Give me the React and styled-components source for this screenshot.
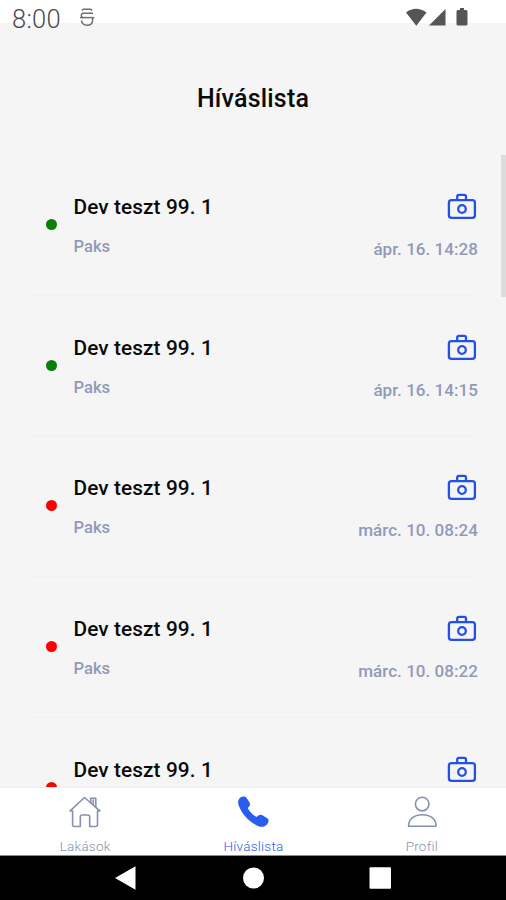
import React from "react";
import styled, { createGlobalStyle } from "styled-components";

const GlobalStyle = createGlobalStyle`
  * {
    box-sizing: border-box;
  }

  body {
    margin: 0;
    background: #f5f5f5;
    font-family: Roboto, "Liberation Sans", sans-serif;
  }

  svg {
    display: block;
  }
`;

const Screen = styled.div`
  display: flex;
  flex-direction: column;
  width: 506px;
  height: 900px;
  overflow: hidden;
  background: #f5f5f5;
`;

const StatusBar = styled.div`
  display: flex;
  flex-shrink: 0;
  height: 23px;
  padding: 0 38px 0 12px;
  background: #fff;
  color: #4c4c4c;
`;

const Clock = styled.span`
  width: 67px;
  height: 38px;
  font-size: 25.5px;
  font-weight: 300;
  line-height: 39px;
  letter-spacing: 0.3px;
`;

const StatusIcons = styled.div`
  margin-left: auto;
`;

const Header = styled.h1`
  flex-shrink: 0;
  height: 132px;
  margin: 0;
  padding-top: 61px;
  text-align: center;
  font-size: 25px;
  font-weight: 500;
  line-height: 30px;
  letter-spacing: 0.2px;
  color: #0a0a0a;
`;

const ListArea = styled.div`
  display: flex;
  flex: 1;
  min-height: 0;
  overflow: hidden;
`;

const List = styled.div`
  flex: 1;
  padding: 0 23px 0 29px;
`;

const ScrollThumb = styled.div`
  width: 5px;
  height: 142px;
  background: #dcdcdc;
`;

const Row = styled.div`
  display: flex;
  height: 140.67px;
  padding-left: 16.5px;
  border-bottom: 1px solid #eff1f3;
`;

const Dot = styled.div`
  width: 11px;
  height: 11px;
  margin: 64px 17px 0 0;
  border-radius: 50%;
  background: ${({ $answered }) => ($answered ? "#087f08" : "#ff0000")};
`;

const Info = styled.div`
  padding-top: 40px;
`;

const Name = styled.div`
  font-size: 20.8px;
  font-weight: 500;
  line-height: 24px;
  letter-spacing: 0.1px;
  color: #0a0a0a;
`;

const Place = styled.div`
  margin-top: 18px;
  font-size: 16.6px;
  font-weight: 500;
  line-height: 20px;
  color: #9199b9;
`;

const Meta = styled.div`
  display: flex;
  flex-direction: column;
  align-items: flex-end;
  margin-left: auto;
  padding-top: 37px;
`;

const CameraSlot = styled.div`
  margin-right: 1px;
`;

const Time = styled(Place)`
  margin-top: 19px;
  font-size: 17px;
  letter-spacing: 0.05px;
`;

const TabBar = styled.nav`
  display: flex;
  flex-shrink: 0;
  height: 69px;
  padding-left: 1px;
  border-top: 1px solid #f0f0f0;
  border-bottom: 1px solid #8c8c8c;
  background: #fff;
`;

const Tab = styled.div`
  display: flex;
  flex: 1;
  flex-direction: column;
  align-items: center;
  padding-top: 7px;
  color: ${({ $active }) => ($active ? "#2b5cf0" : "#8791b0")};
`;

const TabLabel = styled.span`
  margin-top: 9px;
  font-size: 13.5px;
  font-weight: 300;
  line-height: 16px;
  letter-spacing: 0.25px;
`;

const SystemBar = styled.div`
  display: flex;
  flex-shrink: 0;
  height: 44px;
  background: #000;
`;

const calls = [
  { answered: true, place: "Paks", time: "ápr. 16. 14:28" },
  { answered: true, place: "Paks", time: "ápr. 16. 14:15" },
  { answered: false, place: "Paks", time: "márc. 10. 08:24" },
  { answered: false, place: "Paks", time: "márc. 10. 08:22" },
  { answered: false }
];

const CameraIcon = () => (
  <svg width="30" height="28" viewBox="0 0 30 28" fill="none" stroke="#2350e8" strokeWidth="2.3">
    <rect x="1.9" y="8.1" width="26" height="17.8" rx="2.6" />
    <path d="M10.2 8V4.6Q10.2 2.8 12 2.8H17.2Q19 2.8 19 4.6V8" />
    <circle cx="15" cy="17" r="3.8" />
  </svg>
);

const DebugIcon = () => (
  <svg width="17" height="28" viewBox="0 0 17 28" fill="none" stroke="#707070" strokeWidth="1.5">
    <path d="M2.8 10.4 4.4 9.2H11.6L13.2 10.4" />
    <path d="M14 13.2H4.2Q2.4 13.2 2.4 15V15.8Q2.4 17.6 4.2 17.6" />
    <path d="M1 17.6H15.2" />
    <path d="M2.4 20.4Q3.2 25.2 8 25.2 13.6 25.2 13.6 20.2V17.6" />
  </svg>
);

const SignalIcons = () => (
  <svg width="62" height="30" viewBox="0 0 62 30" fill="#555">
    <path d="M0 12.5Q10 5 20.5 12.5L10.3 25.7Z" />
    <path d="M39.5 9V25.5H23Z" />
    <path d="M52 10H54V8H58V10H60Q61.5 10 61.5 11.5V24Q61.5 25.5 60 25.5H52Q50.5 25.5 50.5 24V11.5Q50.5 10 52 10Z" />
  </svg>
);

const HomeIcon = () => (
  <svg width="34" height="34" viewBox="0 0 34 34" fill="none" stroke="currentColor" strokeWidth="1.6" strokeLinejoin="round" strokeLinecap="round">
    <path d="M2.2 15.8 16.5 2.5 31.8 15.8" />
    <path d="M2.2 15.8 4.6 16V29.5Q4.6 31.5 6.5 31.5H12.3V22Q12.3 20 14.2 20H19.8Q21.7 20 21.7 22V31.5H27.6Q29.5 31.5 29.5 29.5V16L31.8 15.8" />
    <path d="M22.8 7.8V3.2H27.8V12.2M25.3 5V9.5" />
  </svg>
);

const PhoneIcon = () => (
  <svg width="34" height="34" viewBox="0 0 34 34" fill="currentColor">
    <path d="M4.2 2.8C6.5 1 9.2 1.2 10.6 3L13.3 7.1C14.6 9.2 13.9 11 11.8 13C13.3 16.3 16.7 20.2 20.6 21.9C22.8 19.8 24.5 19.2 26.5 20.3L31.6 23.5C33.4 24.8 32.6 27.3 30.9 29.4C28.6 32.2 25.5 32.4 22 31C13 27.2 5.7 18.7 2.7 10.5C1.6 7.4 2.2 4.6 4.2 2.8Z" />
  </svg>
);

const ProfileIcon = () => (
  <svg width="34" height="34" viewBox="0 0 34 34" fill="none" stroke="currentColor" strokeWidth="1.6" strokeLinejoin="round">
    <circle cx="17.2" cy="9.1" r="6.8" />
    <path d="M3.7 31.3C3 25 8.6 19.8 17.4 19.8S31.6 25 30.9 31.3Z" />
  </svg>
);

const tabs = [
  { label: "Lakások", Icon: HomeIcon },
  { label: "Híváslista", Icon: PhoneIcon, active: true },
  { label: "Profil", Icon: ProfileIcon }
];

const CallRow = ({ answered, place, time }) => (
  <Row>
    <Dot $answered={answered} />
    <Info>
      <Name>Dev teszt 99. 1</Name>
      {place && <Place>{place}</Place>}
    </Info>
    <Meta>
      <CameraSlot>
        <CameraIcon />
      </CameraSlot>
      {time && <Time>{time}</Time>}
    </Meta>
  </Row>
);

export default function App() {
  return (
    <Screen>
      <GlobalStyle />
      <StatusBar>
        <Clock>8:00</Clock>
        <DebugIcon />
        <StatusIcons>
          <SignalIcons />
        </StatusIcons>
      </StatusBar>
      <Header>Híváslista</Header>
      <ListArea>
        <List>
          {calls.map((call, index) => (
            <CallRow key={index} {...call} />
          ))}
        </List>
        <ScrollThumb />
      </ListArea>
      <TabBar>
        {tabs.map(({ label, Icon, active }) => (
          <Tab key={label} $active={active}>
            <Icon />
            <TabLabel>{label}</TabLabel>
          </Tab>
        ))}
      </TabBar>
      <SystemBar>
        <svg width="506" height="44" viewBox="0 0 506 44" fill="#fff">
          <path d="M115 22 135.5 10.3V33.7Z" />
          <circle cx="253.5" cy="22" r="10.5" />
          <rect x="369.5" y="11.3" width="21.5" height="21.5" rx="1" />
        </svg>
      </SystemBar>
    </Screen>
  );
}
